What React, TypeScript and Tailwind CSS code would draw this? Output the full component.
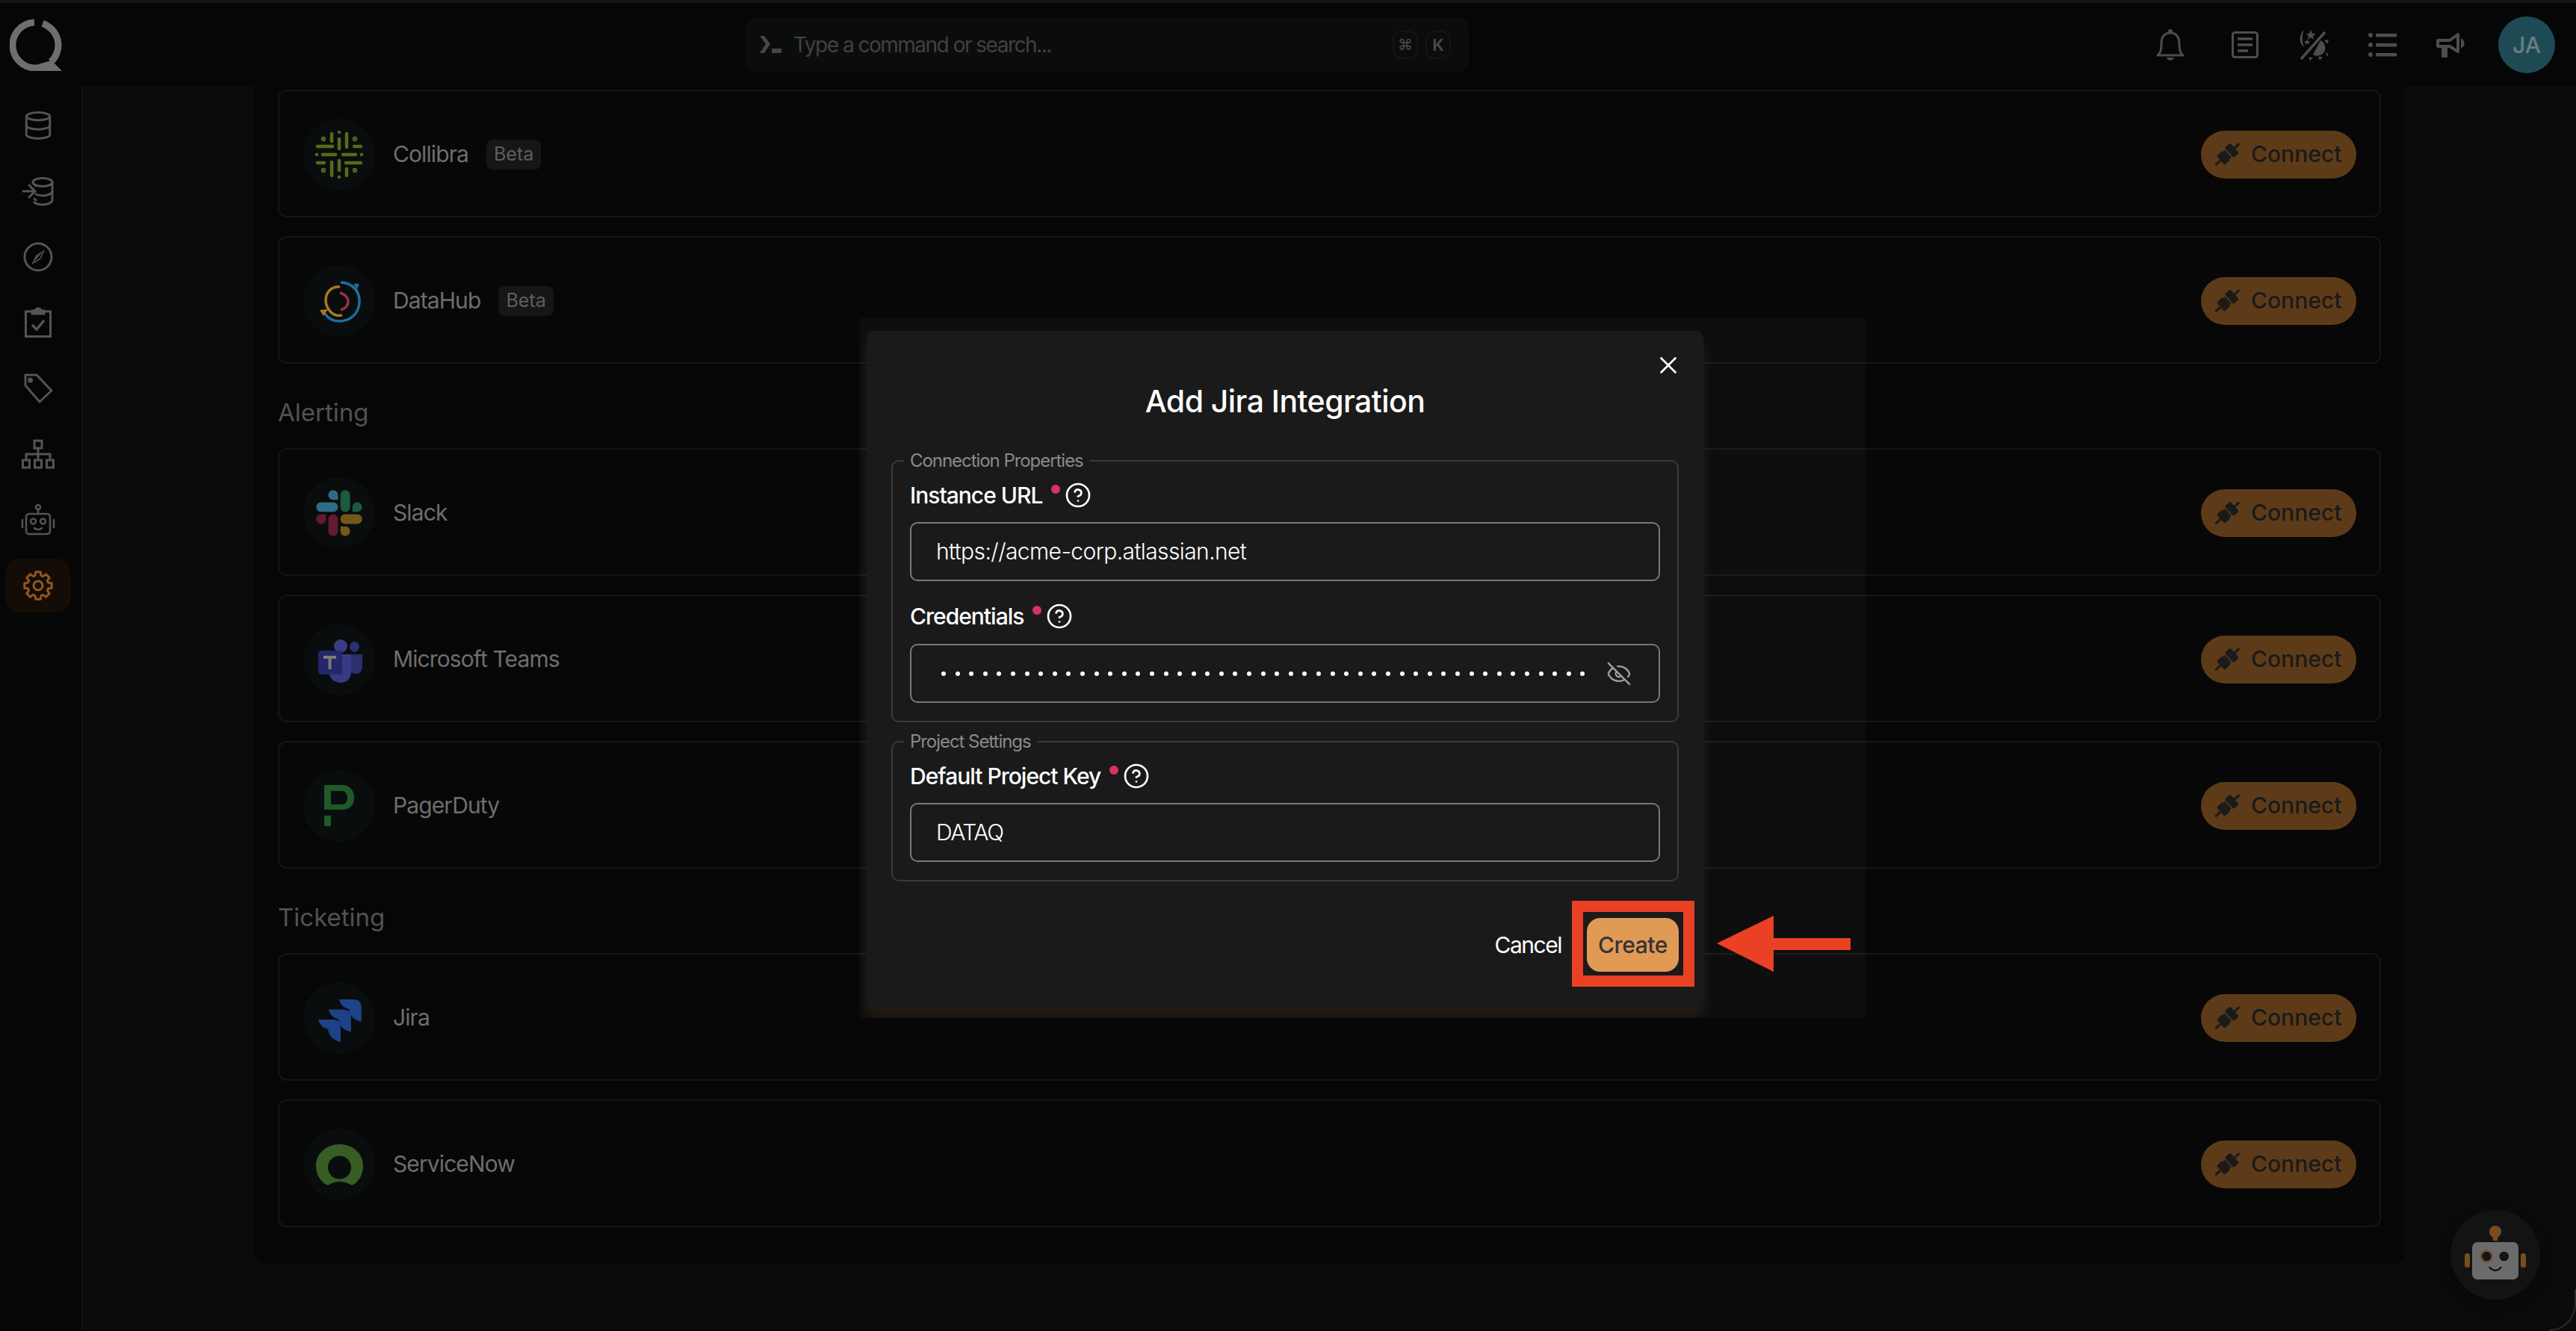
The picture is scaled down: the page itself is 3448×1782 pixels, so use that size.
import { CircleHelp, Database, EyeOff, X } from "lucide-react";

function polar(cx: number, cy: number, r: number, deg: number) {
  const a = (deg * Math.PI) / 180;
  return `${(cx + r * Math.cos(a)).toFixed(2)} ${(cy + r * Math.sin(a)).toFixed(2)}`;
}

function QLogo() {
  return (
    <svg width="70" height="70" viewBox="0 0 70 70" fill="none" stroke="#6e6e6e" strokeWidth="9">
      <path d="M33 5 A30.5 30.5 0 1 0 42 65" />
      <path d="M44 6.5 A30.5 30.5 0 0 1 55 58" />
      <path d="M38 61 L56 56 L70 70 L38 70 Z" fill="#6e6e6e" stroke="none" />
    </svg>
  );
}

function Cog() {
  // 8 blocky teeth
  const pts: string[] = [];
  for (let i = 0; i < 8; i++) {
    const c = i * 45 - 90;
    pts.push(polar(20, 20, 14, c - 17), polar(20, 20, 18.5, c - 10), polar(20, 20, 18.5, c + 10), polar(20, 20, 14, c + 17));
  }
  return (
    <svg width="40" height="40" viewBox="0 0 40 40" fill="none" stroke="#94561c" strokeWidth="3">
      <path d={`M${pts.join(" L")} Z`} strokeLinejoin="round" />
      <circle cx="20" cy="20" r="6" />
    </svg>
  );
}

const sideIcons = [
  <Database size={42} strokeWidth={1.7} color="#545454" />,
  <svg width="44" height="40" viewBox="0 0 44 40" fill="none" stroke="#545454" strokeWidth="3" strokeLinecap="round">
    <ellipse cx="28" cy="8" rx="13" ry="5.5" />
    <path d="M41 8 V32 C41 35 35 38 28 38 C23 38 19 36.500 17 35" />
    <path d="M41 20 C41 23 35 26 28 26 C24 26 21 25 19 24" />
    <path d="M15 9 L19 13 M2 20 H15 M10 12 L18 20 L10 28 M17 30 L19 32" />
  </svg>,
  <svg width="40" height="40" viewBox="0 0 40 40" fill="none" stroke="#545454" strokeWidth="3">
    <circle cx="20" cy="20" r="18" />
    <path d="M28 11 L17 18 L12 29 Z" fill="#545454" stroke="none" />
    <path d="M28 11 L23 22 L12 29" strokeWidth="1.500" />
  </svg>,
  <svg width="38" height="42" viewBox="0 0 38 42" fill="none" stroke="#545454" strokeWidth="3">
    <path d="M11 6 H2.500 V39.500 H35.500 V6 H27" />
    <path d="M11 9 V5 H15.500 C15.500 1 22.500 1 22.500 5 H27 V9 Z" fill="#545454" />
    <path d="M11 24 L17 30 L27 18" strokeWidth="3.500" />
  </svg>,
  <svg width="40" height="40" viewBox="0 0 40 40" fill="none" stroke="#545454" strokeWidth="3" strokeLinejoin="round">
    <path d="M3 2 L18 2 L38 23 L22 38 L3 16 Z" />
    <circle cx="9.500" cy="9" r="2" fill="#545454" />
  </svg>,
  <svg width="44" height="40" viewBox="0 0 44 40" fill="none" stroke="#545454" strokeWidth="3">
    <rect x="17" y="2" width="10" height="10" />
    <rect x="1.500" y="28" width="9" height="10" />
    <rect x="17.500" y="28" width="9" height="10" />
    <rect x="33.500" y="28" width="9" height="10" />
    <path d="M22 12 V28 M6 28 V20 H38 V28" />
  </svg>,
  <svg width="46" height="42" viewBox="0 0 46 42" fill="none" stroke="#545454" strokeWidth="2.500" strokeLinecap="round">
    <circle cx="23" cy="4" r="3" />
    <path d="M23 7 V13" />
    <rect x="7" y="13" width="32" height="27" rx="4" />
    <circle cx="16.500" cy="23" r="3.500" />
    <circle cx="29.500" cy="23" r="3.500" />
    <path d="M18 32 Q23 36 28 32 M2 21 V31 M44 21 V31" />
  </svg>,
];

function Collibra() {
  const h: [number, number, number][] = [[0, -30, -30], [0, -22, -5], [0, 5, 22], [0, 30, 30], [-11, -29, -9], [-11, 20, 29], [11, -29, -20], [11, 9, 29]];
  const v: [number, number, number][] = [[0, -30, -30], [0, -21, -8], [0, 8, 21], [0, 30, 30], [-10, -28, -18], [-10, 10, 28], [10, -28, -10], [10, 19, 28]];
  return (
    <svg width="96" height="96" viewBox="-48 -48 96 96" stroke="#556b1a" strokeWidth="4.500" strokeLinecap="round" fill="#556b1a">
      {h.map(([y, a, b], i) => <line key={i} x1={a} x2={b} y1={y} y2={y} />)}
      {v.map(([x, a, b], i) => <line key={i} x1={x} x2={x} y1={a} y2={b} />)}
      {[[-21, -21], [21, -21], [-21, 21], [21, 21]].map(([x, y], i) => <circle key={i} cx={x} cy={y} r="1" />)}
    </svg>
  );
}

function DataHub() {
  return (
    <svg width="96" height="96" viewBox="0 0 96 96" fill="none" strokeWidth="3.500">
      <path d="M50 23 C66 24 76 35 75 50 C74 66 62 75 48 75 C39 75 33 71 29 65" stroke="#1f6e9e" />
      <path d="M68 25 L72 31 L74 25" stroke="#1f6e9e" fill="#1f6e9e" strokeWidth="1.500" />
      <path d="M49 29 C38 28 30 36 30 47 C30 54 33 59 37 63 C41 67 47 68 52 67" stroke="#a67c1c" />
      <path d="M22 60 L33 59 L27 68 Z" fill="#a67c1c" strokeWidth="0" />
      <path d="M49 37 C56 39 60 43 60 49 C60 55 56 58 50 60" stroke="#9e3044" />
    </svg>
  );
}

function Slack() {
  return (
    <svg width="62" height="62" viewBox="0 0 127 127">
      <path fill="#651a33" d="M27.2 80c0 7.3-5.900 13.200-13.200 13.200C6.700 93.200.800 87.300.800 80c0-7.300 5.900-13.200 13.200-13.200h13.200V80zm6.600 0c0-7.300 5.900-13.200 13.200-13.200 7.300 0 13.200 5.900 13.200 13.200v33c0 7.300-5.900 13.200-13.200 13.200-7.300 0-13.200-5.900-13.200-13.200V80z" />
      <path fill="#2f6c87" d="M47 27c-7.300 0-13.200-5.900-13.200-13.200C33.800 6.500 39.700.600 47 .600c7.300 0 13.200 5.900 13.200 13.200V27H47zm0 6.700c7.300 0 13.200 5.900 13.200 13.200 0 7.300-5.900 13.200-13.200 13.200H13.900C6.600 60.100.700 54.200.700 46.900c0-7.300 5.900-13.200 13.200-13.200H47z" />
      <path fill="#1d5b3e" d="M99.900 46.900c0-7.300 5.900-13.200 13.200-13.200 7.300 0 13.200 5.900 13.200 13.200 0 7.300-5.900 13.200-13.200 13.200H99.900V46.900zm-6.600 0c0 7.300-5.900 13.200-13.200 13.200-7.300 0-13.200-5.900-13.200-13.200V13.800C66.900 6.500 72.800.600 80.100.600c7.300 0 13.200 5.900 13.200 13.200v33.100z" />
      <path fill="#75571b" d="M80.100 99.800c7.300 0 13.200 5.900 13.200 13.200 0 7.300-5.900 13.200-13.200 13.200-7.300 0-13.200-5.900-13.200-13.200V99.800h13.200zm0-6.600c-7.300 0-13.200-5.900-13.200-13.200 0-7.300 5.900-13.200 13.200-13.200h33.100c7.300 0 13.200 5.900 13.200 13.200 0 7.300-5.900 13.200-13.200 13.200H80.100z" />
    </svg>
  );
}

function Teams() {
  return (
    <svg width="96" height="96" viewBox="0 0 96 96">
      <circle cx="50" cy="30" r="9" fill="#3a3d85" />
      <ellipse cx="68.500" cy="31" rx="6.500" ry="7" fill="#2b2f6e" />
      <path d="M61 41 H79 V58 C79 64 75 67 70 67 C65 67 61 64 61 58 Z" fill="#2b2f6e" />
      <path d="M34 41 H64 V64 C64 74 58 79 50 79 C42 79 36 74 34 66 Z" fill="#363a86" />
      <path d="M20 40 C20 37 22 36 24 36 H50 C51 36 52 37 52 38 V66 C52 67 51 68 50 68 H24 C22 68 21 67 20 65 Z" fill="#24276a" />
      <path d="M27 43 H44 V47 H37.500 V61 H33.500 V47 H27 Z" fill="#7c7c7c" />
    </svg>
  );
}

function PagerDuty() {
  return (
    <svg width="96" height="96" viewBox="0 0 96 96" fill="#1f5a27">
      <path fillRule="evenodd" d="M28 20 H52 C62 20 68 27 68 37 C68 47 62 53 52 53 H28 Z M37 28 V46 H52 C56 46 59 42 59 37 C59 32 56 28 52 28 Z" />
      <path d="M28 61 H37 V75 H29 Q28 75 28 74 Z" />
    </svg>
  );
}

function Jira() {
  const leaf = "M0 0 H19 Q30 0 30 11 V30 Q15 27 13 13 Q3 11 0 0 Z";
  return (
    <svg width="96" height="96" viewBox="0 0 96 96" fill="#1d438a">
      <path d={leaf} transform="translate(47.800 23)" />
      <path d={leaf} transform="translate(33.800 36.500)" fill="#1c4186" />
      <path d={leaf} transform="translate(20 50)" fill="#1c4186" />
    </svg>
  );
}

function ServiceNow() {
  return (
    <svg width="96" height="96" viewBox="0 0 96 96" fill="#375d25">
      <path fillRule="evenodd" d="M33 76 C22 71 17 61 17 50 C17 33 31 21 48.500 21 C66 21 80 33 80 50 C80 61 75 71 65 76 Q48.500 66 33 76 Z M48.500 36.500 A15.500 15.500 0 1 0 48.500 67.500 A15.500 15.500 0 1 0 48.500 36.500 Z" />
    </svg>
  );
}

function Plug() {
  return (
    <svg width="40" height="36" viewBox="0 0 40 36" fill="#1a1a1a">
      <g transform="rotate(-42 20 18)">
        <rect x="-1" y="16.500" width="9" height="3" />
        <rect x="8" y="10" width="11" height="16" rx="2" />
        <rect x="19" y="11.500" width="3" height="13" />
        <rect x="23.500" y="9" width="10" height="18" rx="2" />
        <rect x="33" y="16.500" width="9" height="3" />
      </g>
    </svg>
  );
}

function Card({ name, beta, icon }: { name: string; beta?: boolean; icon: React.ReactNode }) {
  return (
    <div className="h-[171px] border-2 border-[#141515] rounded-[12px] bg-[#070707] flex items-center pt-[2px] pl-[32px] pr-[31px]">
      <div className="w-[96px] h-[96px] rounded-full bg-[#0a0d0d] flex items-center justify-center shrink-0">{icon}</div>
      <span className="ml-[24px] text-[30px] text-[#6e6e6e] tracking-[-0.9px]">{name}</span>
      {beta && <span className="ml-[24px] h-[40px] px-[10px] rounded-[8px] bg-[#161616] text-[#5e5e5e] text-[25px] flex items-center">Beta</span>}
      <button className="ml-auto w-[208px] h-[64px] rounded-full bg-[#5e3b18] text-[#1a1a1a] text-[30px] font-medium flex items-center pl-[15px]">
        <Plug />
        <span className="ml-[12px]">Connect</span>
      </button>
    </div>
  );
}

function Section({ title }: { title: string }) {
  return <div className="h-[113px] pt-[19px] flex items-center text-[33px] text-[#525252]">{title}</div>;
}

function Label({ text }: { text: string }) {
  return (
    <div className="h-[40px] flex items-center text-white text-[30px] font-medium tracking-[-1px]">
      {text}
      <span className="ml-[12px] mb-[16px] w-[12px] h-[12px] rounded-full bg-[#d6335f]" />
      <CircleHelp size={36} strokeWidth={1.8} color="#fff" className="ml-[6px]" />
    </div>
  );
}

export default function App() {
  return (
    <div className="relative w-[3448px] h-[1782px] overflow-hidden bg-[#0a0c0c] flex flex-col font-['Inter',sans-serif]">
      <div className="h-[4px] bg-[#131616] shrink-0" />

      {/* Top bar */}
      <div className="h-[112px] shrink-0 bg-[#060606] flex items-center pl-[13px] pr-[28px]">
        <QLogo />
        <div className="ml-[915px] w-[968px] h-[72px] rounded-[14px] bg-[#0b0d0d] flex items-center pl-[19px] pr-[24px]">
          <svg width="30" height="26" viewBox="0 0 30 26" fill="#474747">
            <path d="M0 1 H6 L14 12 L6 24 H0 L8 12 Z" />
            <rect x="16" y="18" width="13" height="6" />
          </svg>
          <span className="ml-[15px] text-[28px] text-[#414141] tracking-[-1.5px]">Type a command or search...</span>
          <span className="ml-auto w-[34px] h-[38px] rounded-[12px] border-2 border-[#141616] flex items-center justify-center text-[20px] text-[#4a4a4a] font-['DejaVu_Sans',sans-serif]">⌘</span>
          <span className="ml-[10px] w-[34px] h-[38px] rounded-[12px] border-2 border-[#141616] flex items-center justify-center text-[22px] text-[#4a4a4a] font-semibold">K</span>
        </div>
        <div className="ml-auto flex items-center">
          <div className="w-[108px] flex justify-center">
            <svg width="38" height="44" viewBox="0 0 38 44" fill="none" stroke="#4d4d4d" strokeWidth="3">
              <path d="M2 36 C6 33 7 29 7 20 C7 11 12 6 19 6 C26 6 31 11 31 20 C31 29 32 33 36 36 Z" strokeLinejoin="round" />
              <circle cx="19" cy="4" r="3" fill="#4d4d4d" stroke="none" />
              <path d="M14 39 H24 C23 44 15 44 14 39 Z" fill="#4d4d4d" stroke="none" />
            </svg>
          </div>
          <div className="w-[92px] flex justify-center">
            <svg width="36" height="36" viewBox="0 0 36 36" fill="none" stroke="#4d4d4d" strokeWidth="3">
              <rect x="1.500" y="1.500" width="33" height="33" rx="3" />
              <path d="M8 10 H28 M8 18 H28 M8 26 H22" strokeWidth="3.500" />
            </svg>
          </div>
          <div className="w-[92px] flex justify-center">
            <svg width="42" height="42" viewBox="0 0 42 42" fill="#4d4d4d">
              <path d="M4 40 L36 4" stroke="#4d4d4d" strokeWidth="3.500" fill="none" />
              <path d="M8 1 C2 6 0 18 8 24 C5 17 5 8 8 1 Z" />
              <path d="M17 1 L19 6 L24 6 L20 9 L21 14 L17 11 L13 14 L14 9 L11 6 L15 6 Z" />
              <path d="M12 13 L13 16 L16 16 L14 18 L15 21 L12 19 L9 21 L10 18 L8 16 L11 16 Z" />
              <path d="M30 15 C37 18 38 27 34 32 C30 36 24 37 20 34 Z" />
              <path d="M35 15 L41 14 L39 20 Z M37 34 L41 37 L38 30 Z M27 37 L33 37 L29 42 Z M15 37 L20 39 L15 42 Z" />
            </svg>
          </div>
          <div className="w-[92px] flex justify-center">
            <svg width="38" height="32" viewBox="0 0 38 32" fill="#4d4d4d">
              <circle cx="3" cy="3" r="3" />
              <circle cx="3" cy="16" r="3" />
              <circle cx="3" cy="29" r="3" />
              <rect x="10" y="1" width="28" height="4.500" />
              <rect x="10" y="14" width="28" height="4.500" />
              <rect x="10" y="27" width="28" height="4.500" />
            </svg>
          </div>
          <div className="w-[92px] flex justify-center">
            <svg width="40" height="36" viewBox="0 0 40 36" fill="none" stroke="#4d4d4d" strokeWidth="4">
              <path d="M2 12 H18 L29 4 V27 L18 20 H2 Z" strokeLinejoin="round" />
              <path d="M7 20 H15 V35 H7 Z" fill="#4d4d4d" stroke="none" />
              <path d="M33 9 C39 12 39 20 33 23 Z" fill="#4d4d4d" stroke="none" />
            </svg>
          </div>
          <div className="ml-[17px] w-[76px] h-[76px] rounded-full bg-[#1e4a55] flex items-center justify-center text-[30px] font-medium text-[#6c7e83]">JA</div>
        </div>
      </div>

      <div className="flex-1 flex min-h-0">
        {/* Sidebar */}
        <div className="w-[111px] shrink-0 bg-[#060606] border-r-2 border-[#101212] pt-[8px] pl-[8px]">
          {sideIcons.map((icon, i) => (
            <div key={i} className="w-[86px] h-[88px] flex items-center justify-center">{icon}</div>
          ))}
          <div className="w-[86px] h-[88px] flex items-center">
            <div className="w-[86px] h-[72px] rounded-[18px] bg-[#140d07] flex items-center justify-center"><Cog /></div>
          </div>
        </div>

        {/* Integrations panel */}
        <div className="flex-1 min-w-0 px-[229px]">
          <div className="h-[1576px] rounded-b-[16px] bg-[#060606] px-[32px] pt-[4px] flex flex-col">
            <div className="flex flex-col gap-[25px]">
              <Card name="Collibra" beta icon={<Collibra />} />
              <Card name="DataHub" beta icon={<DataHub />} />
            </div>
            <Section title="Alerting" />
            <div className="flex flex-col gap-[25px]">
              <Card name="Slack" icon={<Slack />} />
              <Card name="Microsoft Teams" icon={<Teams />} />
              <Card name="PagerDuty" icon={<PagerDuty />} />
            </div>
            <Section title="Ticketing" />
            <div className="flex flex-col gap-[25px]">
              <Card name="Jira" icon={<Jira />} />
              <Card name="ServiceNow" icon={<ServiceNow />} />
            </div>
          </div>
        </div>
      </div>

      {/* Chat bot */}
      <div className="absolute left-[3280px] top-[1620px] w-[120px] h-[120px] rounded-full bg-[#131313] shadow-[0_6px_20px_rgba(0,0,0,0.4)]">
        <svg width="120" height="120" viewBox="0 0 120 120">
          <circle cx="60" cy="29" r="8" fill="#774c22" />
          <path d="M56 34 H64 L63 41 H57 Z" fill="#774c22" />
          <rect x="29" y="43" width="62" height="50" rx="7" fill="#6b6b6b" />
          <rect x="19" y="58" width="7" height="19" rx="3" fill="#774c22" />
          <rect x="94" y="58" width="7" height="19" rx="3" fill="#774c22" />
          <circle cx="48.300" cy="62" r="8" fill="none" stroke="#774c22" strokeWidth="1.500" />
          <circle cx="48.300" cy="62" r="6.300" fill="#141414" />
          <circle cx="71.700" cy="62" r="6.300" fill="#141414" />
          <path d="M52.500 77 Q60 85 67.500 77" fill="none" stroke="#141414" strokeWidth="2.500" strokeLinecap="round" />
        </svg>
      </div>

      {/* Window corner */}
      <div className="absolute right-0 bottom-0 w-[36px] h-[56px] rounded-br-[36px] border-r-2 border-b-2 border-[#2b2b2b]" />

      {/* Modal */}
      <div className="absolute left-[1151px] top-[426px] w-[1346px] h-[937px] bg-white/[0.03] overflow-hidden">
        <div className="absolute left-[9px] top-[17px] w-[1120px] h-[906px] rounded-[10px] bg-[#1a1a1a] shadow-[0_12px_16px_rgba(224,154,85,0.11)] px-[33px] pt-[67px] flex flex-col">
          <X size={38} strokeWidth={1.7} color="#fff" className="absolute right-[28px] top-[27px]" />
          <div className="h-[56px] flex items-center justify-center text-[41px] font-medium text-white tracking-[-0.55px]">Add Jira Integration</div>

          <fieldset className="mt-[36px] border-2 border-[#3a3a3a] rounded-[10px] px-[23px] pb-[24px]">
            <legend className="-ml-[8px] px-[8px] text-[24px] leading-[30px] text-[#8a8a8a] tracking-[-1.05px]">Connection Properties</legend>
            <div className="mt-[11px]"><Label text="Instance URL" /></div>
            <div className="mt-[16px] h-[79px] border-2 border-[#7a7a7a] rounded-[10px] flex items-center pl-[33px] text-[30px] text-white font-light tracking-[-0.6px]">https://acme-corp.atlassian.net</div>
            <div className="mt-[27px]"><Label text="Credentials" /></div>
            <div className="mt-[17px] h-[79px] border-2 border-[#7a7a7a] rounded-[10px] flex items-center pl-[40px]">
              {Array.from({ length: 47 }).map((_, i) => (
                <span key={i} className="w-[6px] h-[6px] mr-[12.600px] rounded-full bg-white shrink-0" />
              ))}
              <EyeOff size={34} strokeWidth={1.6} color="#a0a0a0" className="ml-[16px]" />
            </div>
          </fieldset>

          <fieldset className="mt-[11px] border-2 border-[#3a3a3a] rounded-[10px] px-[23px] pb-[24px]">
            <legend className="-ml-[8px] px-[8px] text-[24px] leading-[30px] text-[#8a8a8a] tracking-[-1.05px]">Project Settings</legend>
            <div className="mt-[11px]"><Label text="Default Project Key" /></div>
            <div className="mt-[16px] h-[79px] border-2 border-[#7a7a7a] rounded-[10px] flex items-center pl-[33px] text-[30px] text-white font-light tracking-[-1.5px]">DATAQ</div>
          </fieldset>

          <div className="mt-[49px] flex items-center justify-end">
            <span className="text-[30px] text-white tracking-[-1.5px]">Cancel</span>
            <button className="ml-[34px] w-[123px] h-[72px] rounded-[18px] bg-[#e09a55] text-[#333] text-[30px] font-medium tracking-[-0.4px]">Create</button>
          </div>
        </div>
      </div>

      {/* Annotation */}
      <div className="absolute left-[2104px] top-[1206px] w-[164px] h-[115px] border-[15px] border-[#ea4024]" />
      <svg className="absolute left-[2298px] top-[1226px]" width="180" height="76" viewBox="0 0 180 76" fill="#ea4024">
        <path d="M0 37 L76 0 V30 H179 V46 H76 V75 Z" />
      </svg>
    </div>
  );
}
